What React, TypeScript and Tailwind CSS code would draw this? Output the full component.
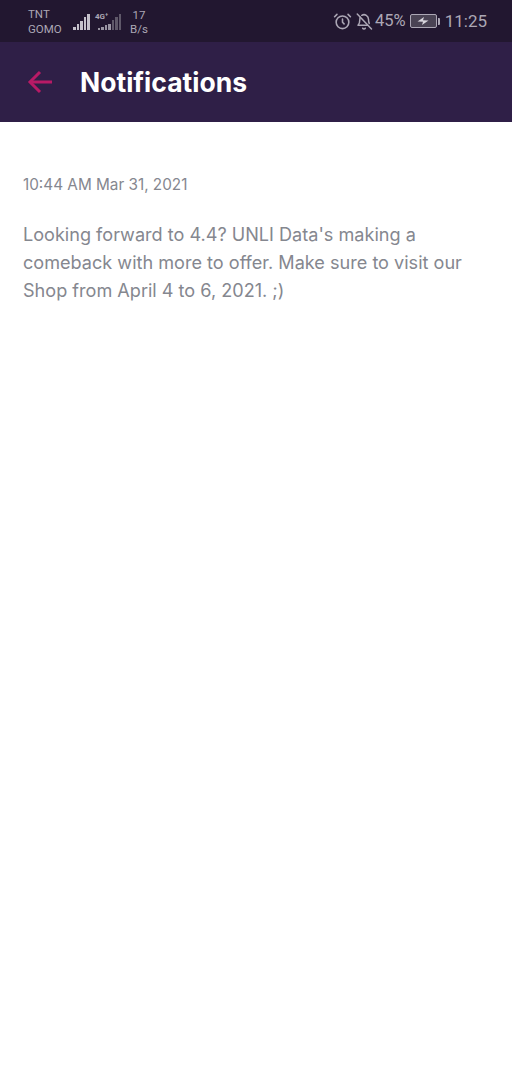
import React from 'react';

const SignalBars = ({ heights, className }: { heights: number[]; className: string }) => (
  <div className={`flex items-end gap-[1px] h-[17px] ${className}`}>
    {heights.map((h, i) => (
      <div key={i} className="w-[2.5px] bg-current" style={{ height: h }} />
    ))}
  </div>
);

const StatusBar = () => (
  <div className="flex items-center justify-between h-[42px] bg-[#221730] pl-[28px] pr-[25px] text-[#aca7b5] font-['Roboto',sans-serif]">
    <div className="flex items-center">
      <div className="w-[45px] text-[11.500px] leading-[15px] pt-[1px]">
        <div>TNT</div>
        <div>GOMO</div>
      </div>
      <div className="relative flex items-end">
        <SignalBars heights={[3, 6, 9, 13, 16]} className="text-[#c5c1cb]" />
        <span className="absolute left-[22px] top-[0px] text-[8px] leading-[8px] font-bold">4G⁺</span>
        <SignalBars heights={[2, 3, 5, 6]} className="text-[#9a95a3] ml-[8px]" />
        <SignalBars heights={[10, 13, 16]} className="text-[#5f5869] ml-[1px]" />
      </div>
      <div className="w-[30px] ml-[3px] text-center text-[11.500px] leading-[14px] pt-[1px]">
        <div>17</div>
        <div>B/s</div>
      </div>
    </div>
    <div className="flex items-center">
      <svg width="19" height="19" viewBox="0 0 24 24" fill="none" stroke="currentColor" strokeWidth="2" strokeLinecap="round" strokeLinejoin="round">
        <circle cx="12" cy="13" r="8" />
        <path d="M12 9v4l2 2" />
        <path d="M5 3 2 6" />
        <path d="m22 6-3-3" />
      </svg>
      <svg className="ml-[3px]" width="18" height="19" viewBox="0 0 24 24" fill="none" stroke="currentColor" strokeWidth="2" strokeLinecap="round" strokeLinejoin="round">
        <path d="M10.3 21a2 2 0 0 0 3.4 0" />
        <path d="M17 17H4c1.500-1.500 2.500-3 2.500-8 0-.9.2-1.800.6-2.500" />
        <path d="M9 3.700A6 6 0 0 1 18 9c0 2.500.4 4.300 1 5.500" />
        <path d="m3 2 19 20" />
      </svg>
      <span className="ml-[2px] text-[16.500px] leading-none">45%</span>
      <div className="relative ml-[4px] flex items-center">
        <div className="w-[27px] h-[14px] rounded-[2px] border border-[#aca7b5] bg-[#4a4354] flex items-center justify-center">
          <svg width="12" height="8" viewBox="0 0 11 8" fill="#d8d5dd">
            <path d="M0 4.500 6.500 0 5.500 3.200 11 3.500 4.500 8l1-3.200z" />
          </svg>
        </div>
        <div className="w-[2px] h-[7px] ml-[1px] bg-[#aca7b5] rounded-r-[1px]" />
      </div>
      <span className="ml-[5px] text-[17px] leading-none">11:25</span>
    </div>
  </div>
);

export default function App() {
  return (
    <div className="min-h-[1080px] w-[512px] bg-white font-['Inter','Noto_Sans',sans-serif]">
      <StatusBar />
      <div className="flex items-center h-[80px] bg-[#2f1f47]">
        <svg className="ml-[27px]" width="26" height="24" viewBox="0 0 26 24" fill="none" stroke="#b81a66" strokeWidth="3">
          <path d="M25 12H3" />
          <path d="M13 2 3 12l10 10" />
        </svg>
        <h1 className="ml-[27px] text-[26.500px] leading-none font-bold text-white">Notifications</h1>
      </div>
      <div className="px-[23px] pt-[53px]">
        <p className="text-[15.300px] leading-[20px] text-[#85878f]">10:44 AM Mar 31, 2021</p>
        <p className="mt-[25px] text-[18.100px] leading-[28px] text-[#85878f]">
          Looking forward to 4.4? UNLI Data's making a
          <br />
          comeback with more to offer. Make sure to visit our
          <br />
          Shop from April 4 to 6, 2021. ;)
        </p>
      </div>
    </div>
  );
}
